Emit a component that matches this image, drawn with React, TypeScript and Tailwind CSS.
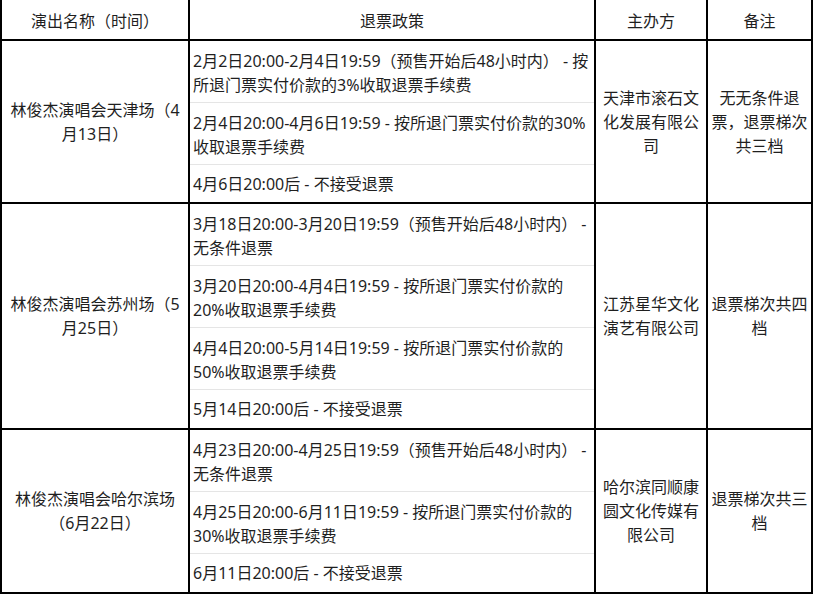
import React from "react";

type Row = {
  name: string[];
  policies: string[][];
  org: string[];
  note: string[];
};

const rows: Row[] = [
  {
    name: ["林俊杰演唱会天津场（4", "月13日）"],
    policies: [
      ["2月2日20:00-2月4日19:59（预售开始后48小时内） - 按", "所退门票实付价款的3%收取退票手续费"],
      ["2月4日20:00-4月6日19:59 - 按所退门票实付价款的30%", "收取退票手续费"],
      ["4月6日20:00后 - 不接受退票"],
    ],
    org: ["天津市滚石文", "化发展有限公", "司"],
    note: ["无无条件退", "票，退票梯次", "共三档"],
  },
  {
    name: ["林俊杰演唱会苏州场（5", "月25日）"],
    policies: [
      ["3月18日20:00-3月20日19:59（预售开始后48小时内） -", "无条件退票"],
      ["3月20日20:00-4月4日19:59 - 按所退门票实付价款的", "20%收取退票手续费"],
      ["4月4日20:00-5月14日19:59 - 按所退门票实付价款的", "50%收取退票手续费"],
      ["5月14日20:00后 - 不接受退票"],
    ],
    org: ["江苏星华文化", "演艺有限公司"],
    note: ["退票梯次共四", "档"],
  },
  {
    name: ["林俊杰演唱会哈尔滨场", "（6月22日）"],
    policies: [
      ["4月23日20:00-4月25日19:59（预售开始后48小时内） -", "无条件退票"],
      ["4月25日20:00-6月11日19:59 - 按所退门票实付价款的", "30%收取退票手续费"],
      ["6月11日20:00后 - 不接受退票"],
    ],
    org: ["哈尔滨同顺康", "圆文化传媒有", "限公司"],
    note: ["退票梯次共三", "档"],
  },
];

function Lines({ lines }: { lines: string[] }) {
  return (
    <>
      {lines.map((l, i) => (
        <div key={i} className="whitespace-nowrap">
          {l}
        </div>
      ))}
    </>
  );
}

function CenterCell({ lines }: { lines: string[] }) {
  return (
    <div className="bg-white flex flex-col items-center justify-center text-center">
      <Lines lines={lines} />
    </div>
  );
}

export default function App() {
  return (
    <div className="w-[813px] h-[595px] bg-white overflow-hidden text-[16px] leading-[24px] text-[#1f1f1f] font-['Noto_Sans','Noto_Sans_CJK_SC',sans-serif]">
      <div className="bg-black px-[2px] pb-[2px]">
        <div className="grid grid-cols-[186px_404px_110px_103px] grid-rows-[39px_161px_224px_162px] gap-[2px]">
          <div className="bg-white flex items-center justify-center pt-[3px]">演出名称（时间）</div>
          <div className="bg-white flex items-center justify-center pt-[3px]">退票政策</div>
          <div className="bg-white flex items-center justify-center pt-[3px]">主办方</div>
          <div className="bg-white flex items-center justify-center pt-[3px]">备注</div>
          {rows.map((r, ri) => (
            <React.Fragment key={ri}>
              <CenterCell lines={r.name} />
              <div className="bg-white flex flex-col divide-y divide-[#e5e5e5]">
                {r.policies.map((p, pi) => (
                  <div
                    key={pi}
                    className={
                      pi === r.policies.length - 1
                        ? "flex-1 pl-[3px] flex items-center"
                        : "pl-[3px] pt-[8px] pb-[5px]"
                    }
                  >
                    <div>
                      <Lines lines={p} />
                    </div>
                  </div>
                ))}
              </div>
              <CenterCell lines={r.org} />
              <CenterCell lines={r.note} />
            </React.Fragment>
          ))}
        </div>
      </div>
    </div>
  );
}
